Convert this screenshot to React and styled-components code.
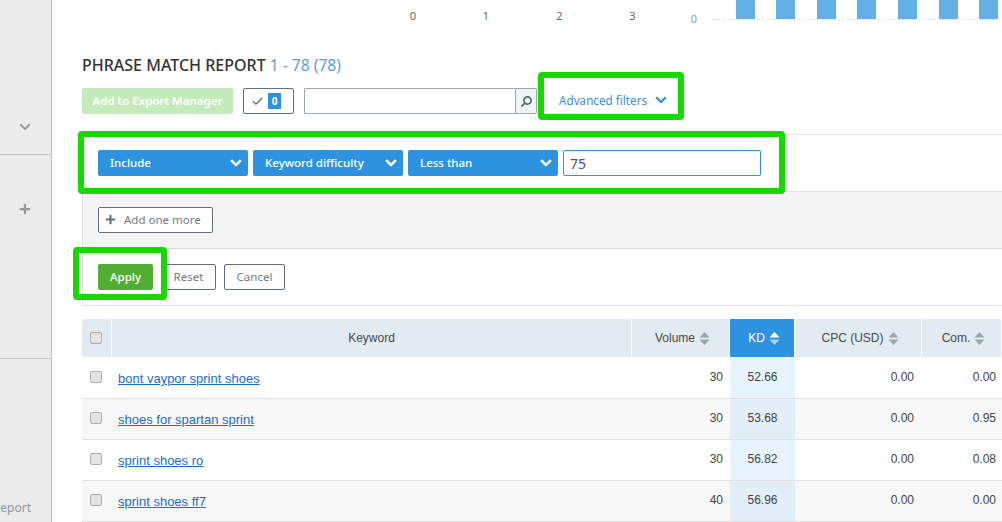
import React from 'react';
import styled, { createGlobalStyle } from 'styled-components';
import { FaChevronDown, FaPlus, FaSearch } from 'react-icons/fa';
import { Check } from 'lucide-react';

const rows = [
  { keyword: 'bont vaypor sprint shoes', volume: 30, kd: '52.66', cpc: '0.00', com: '0.00' },
  { keyword: 'shoes for spartan sprint', volume: 30, kd: '53.68', cpc: '0.00', com: '0.95' },
  { keyword: 'sprint shoes ro', volume: 30, kd: '56.82', cpc: '0.00', com: '0.08' },
  { keyword: 'sprint shoes ff7', volume: 40, kd: '56.96', cpc: '0.00', com: '0.00' },
];

const barPositions = [736, 776, 817, 857, 898, 939, 979];
const columns = '30px 520px 98px 65px 127px 80px';

const SortIcon = ({ active }) => (
  <SortSvg width="11" height="13" viewBox="0 0 11 13">
    <path d="M5.5 0 L10.5 5.5 H0.5 Z" fill={active ? '#fff' : '#9aa7ad'} />
    <path d="M0.5 7.5 H10.5 L5.5 13 Z" fill={active ? '#a9d3f3' : '#9aa7ad'} />
  </SortSvg>
);

const Chart = () => (
  <ChartSvg width="950" height="40" viewBox="52 0 950 40">
    {[['0', 413], ['1', 486], ['2', 559.5], ['3', 632.5]].map(([label, x]) => (
      <text key={x} x={x} y="20" textAnchor="middle" fontSize="11" fill="#666">{label}</text>
    ))}
    <text x="694" y="23" textAnchor="middle" fontSize="11" fill="#999">0</text>
    {barPositions.map((x) => (
      <rect key={x} x={x} y="0" width="19" height="19" fill="#63b0e6" />
    ))}
    <line x1="712" y1="19.5" x2="1002" y2="19.5" stroke="#dfe3e6" strokeDasharray="3 2" />
  </ChartSvg>
);

const App = () => {
  return (
    <Page>
      <GlobalStyle />
      <Sidebar>
        <SideSection $height={155} $pad={121}>
          <FaChevronDown />
        </SideSection>
        <SideSection $height={204} $pad={48}>
          <FaPlus />
        </SideSection>
        <SideFooter>report</SideFooter>
      </Sidebar>

      <Main>
        <Chart />
        <Title>
          PHRASE MATCH REPORT <TitleCount>1 - 78 (78)</TitleCount>
        </Title>

        <Toolbar>
          <ExportButton>Add to Export Manager</ExportButton>
          <SelectedBox>
            <Check size={13} strokeWidth={2.2} color="#5b6b75" />
            <Badge>0</Badge>
          </SelectedBox>
          <SearchGroup>
            <SearchInput />
            <SearchButton><FaSearch /></SearchButton>
          </SearchGroup>
          <AdvancedLink>
            Advanced filters <FaChevronDown />
          </AdvancedLink>
        </Toolbar>

        <FilterPanel>
          <FilterRow>
            <SelectButton>Include <FaChevronDown /></SelectButton>
            <SelectButton>Keyword difficulty <FaChevronDown /></SelectButton>
            <SelectButton>Less than <FaChevronDown /></SelectButton>
            <ValueInput value="75" readOnly />
          </FilterRow>
          <AddRow>
            <AddButton>
              <FaPlus /> Add one more
            </AddButton>
          </AddRow>
          <ActionRow>
            <ApplyButton>Apply</ApplyButton>
            <OutlineButton $width={55}>Reset</OutlineButton>
            <OutlineButton $width={61}>Cancel</OutlineButton>
          </ActionRow>
        </FilterPanel>

        <Table>
          <HeaderRow>
            <CheckHead><CheckBox /></CheckHead>
            <HeadCell>Keyword</HeadCell>
            <HeadCell $sortable>Volume <SortIcon /></HeadCell>
            <HeadCell $sortable $active>KD <SortIcon active /></HeadCell>
            <HeadCell $sortable>CPC (USD) <SortIcon /></HeadCell>
            <HeadCell $sortable>Com. <SortIcon /></HeadCell>
          </HeaderRow>
          {rows.map((row, i) => (
            <BodyRow key={row.keyword} $odd={i % 2 === 1}>
              <CheckCell><CheckBox /></CheckCell>
              <KeywordCell><KeywordLink href="#">{row.keyword}</KeywordLink></KeywordCell>
              <NumCell>{row.volume}</NumCell>
              <KdCell $odd={i % 2 === 1}>{row.kd}</KdCell>
              <NumCell $pad={8}>{row.cpc}</NumCell>
              <NumCell $pad={6}>{row.com}</NumCell>
            </BodyRow>
          ))}
        </Table>

        <Highlight $left={486} $top={72} $width={146} $height={48} />
        <Highlight $left={26} $top={131} $width={707} $height={63} />
        <Highlight $left={21} $top={247} $width={94} $height={53} />
      </Main>
    </Page>
  );
};

const GlobalStyle = createGlobalStyle`
  html, body {
    margin: 0;
    padding: 0;
    height: 100%;
    overflow: hidden;
    background: #fff;
  }
  * {
    box-sizing: border-box;
  }
`;

const uiFont = `"Noto Sans", "Open Sans", sans-serif`;
const tableFont = `"Liberation Sans", Arial, sans-serif`;

const Page = styled.div`
  display: flex;
  width: 1002px;
  height: 522px;
  overflow: hidden;
  font-family: ${uiFont};
`;

const Sidebar = styled.aside`
  display: flex;
  flex-direction: column;
  flex: 0 0 52px;
  background: #ececec;
  border-right: 1px solid #bdbdbd;
  overflow: hidden;
`;

const SideSection = styled.div`
  display: flex;
  justify-content: center;
  align-items: flex-start;
  height: ${(p) => p.$height}px;
  padding-top: ${(p) => p.$pad}px;
  padding-right: 2px;
  border-bottom: 1px solid #c4c4c4;
  color: #9a9a9a;
  font-size: 12px;
`;

const SideFooter = styled.div`
  display: flex;
  flex: 1;
  justify-content: flex-end;
  align-items: flex-end;
  padding: 0 20px 6px 0;
  color: #8f9aa3;
  font-size: 12px;
`;

const Main = styled.main`
  position: relative;
  flex: 1;
  min-width: 0;
`;

const ChartSvg = styled.svg`
  display: block;
  margin-bottom: 15px;
  font-family: ${uiFont};
`;

const Title = styled.h2`
  margin: 0 0 12px 30px;
  height: 21px;
  color: #333;
  font-size: 16px;
  line-height: 21px;
  font-weight: 500;
  white-space: nowrap;
`;

const TitleCount = styled.span`
  color: #5b9bd5;
  font-size: 15.6px;
  font-weight: 400;
`;

const Toolbar = styled.div`
  display: flex;
  align-items: center;
  height: 26px;
  margin-left: 30px;
`;

const ExportButton = styled.button`
  width: 151px;
  height: 26px;
  margin-right: 10px;
  padding: 0 0 2px;
  border: 0;
  border-radius: 2px;
  background: #c5eabb;
  color: #fff;
  font-family: inherit;
  font-size: 11.5px;
  font-weight: 600;
`;

const SelectedBox = styled.div`
  display: flex;
  align-items: center;
  gap: 4px;
  width: 51px;
  height: 26px;
  margin-right: 10px;
  padding-left: 7px;
  border: 1px solid #5f717c;
  border-radius: 2px;
`;

const Badge = styled.span`
  width: 13px;
  height: 16px;
  background: #2d93e0;
  color: #fff;
  font-size: 10px;
  font-weight: 700;
  line-height: 16px;
  text-align: center;
`;

const SearchGroup = styled.div`
  display: flex;
  width: 233px;
  height: 26px;
`;

const SearchInput = styled.input`
  flex: 1;
  min-width: 0;
  border: 1px solid #9aa8b0;
  border-right: 0;
  border-radius: 2px 0 0 2px;
  outline: none;
`;

const SearchButton = styled.button`
  display: flex;
  align-items: center;
  justify-content: center;
  width: 22px;
  padding: 0;
  border: 1px solid #9aa8b0;
  border-radius: 0 2px 2px 0;
  background: #f1f4f5;
  color: #5b6b75;
  font-size: 11px;

  svg {
    transform: scaleX(-1);
  }
`;

const AdvancedLink = styled.a`
  display: flex;
  align-items: center;
  gap: 8px;
  margin-left: 22px;
  padding-bottom: 3px;
  color: #3d8fd6;
  font-size: 11.7px;
  white-space: nowrap;

  svg {
    font-size: 12px;
    stroke: currentColor;
    stroke-width: 24px;
  }
`;

const FilterPanel = styled.section`
  height: 172px;
  margin: 20px 0 13px 30px;
  border-top: 1px solid #e3e3e3;
  border-bottom: 1px solid #e3e3e3;
  border-left: 1px solid #e3e3e3;
`;

const FilterRow = styled.div`
  display: flex;
  gap: 5px;
  height: 56px;
  padding: 15px 0 0 15px;
`;

const SelectButton = styled.button`
  display: flex;
  align-items: center;
  justify-content: space-between;
  width: 150px;
  height: 26px;
  padding: 0 6px 2px 12px;
  border: 0;
  border-radius: 2px;
  background: #2d93e0;
  color: #fff;
  font-family: inherit;
  font-size: 11.5px;
  font-weight: 500;

  svg {
    margin-top: 2px;
    font-size: 12px;
    stroke: currentColor;
    stroke-width: 36px;
  }
`;

const ValueInput = styled.input`
  width: 198px;
  height: 26px;
  padding: 0 6px;
  border: 1px solid #2d93e0;
  border-radius: 2px;
  outline: none;
  color: #555;
  font-family: inherit;
  font-size: 14px;
`;

const AddRow = styled.div`
  display: flex;
  align-items: center;
  height: 58px;
  padding: 0 0 1px 15px;
  border-top: 1px solid #e3e3e3;
  border-bottom: 1px solid #dcdcdc;
  background: #f4f4f4;
`;

const ActionRow = styled.div`
  display: flex;
  align-items: center;
  gap: 8px;
  height: 55px;
  padding-left: 15px;
`;

const OutlineButton = styled.button`
  display: flex;
  align-items: center;
  justify-content: center;
  width: ${(p) => p.$width}px;
  height: 26px;
  padding: 0;
  border: 1px solid #5f717c;
  border-radius: 2px;
  background: #fff;
  color: #6f7c84;
  font-family: inherit;
  font-size: 11.5px;
`;

const AddButton = styled(OutlineButton)`
  justify-content: flex-start;
  gap: 8px;
  width: 115px;
  padding-left: 6px;

  svg {
    color: #5f717c;
    font-size: 11px;
  }
`;

const ApplyButton = styled.button`
  width: 55px;
  height: 26px;
  padding: 0;
  border: 0;
  border-radius: 2px;
  background: #52ae32;
  color: #fff;
  font-family: inherit;
  font-size: 11.5px;
  font-weight: 500;
`;

const Table = styled.div`
  margin-left: 30px;
  width: 920px;
  font-family: ${tableFont};
  font-size: 12px;
`;

const HeaderRow = styled.div`
  display: grid;
  grid-template-columns: ${columns};
  height: 38px;
  margin-bottom: 1px;
`;

const HeadCell = styled.div`
  display: flex;
  align-items: center;
  justify-content: center;
  gap: 4px;
  padding-left: ${(p) => (p.$sortable ? 4 : 0)}px;
  border-right: 1px solid #fff;
  background: ${(p) => (p.$active ? '#2d93e0' : '#e2ebf1')};
  color: ${(p) => (p.$active ? '#fff' : '#4a4a4a')};
`;

const CheckHead = styled(HeadCell)`
  justify-content: flex-start;
  padding-left: 8px;
`;

const SortSvg = styled.svg`
  display: block;
`;

const BodyRow = styled.div`
  display: grid;
  grid-template-columns: ${columns};
  height: 41px;
  border-bottom: 1px solid #e0e0e0;
  background: ${(p) => (p.$odd ? '#f8f8f8' : '#fff')};
  color: #444;
`;

const CheckBox = styled.span`
  display: block;
  width: 12px;
  height: 12px;
  border: 1px solid #adadad;
  border-radius: 2px;
  background: #e4e4e4;
`;

const CheckCell = styled.div`
  padding: 13px 0 0 8px;
`;

const KeywordCell = styled.div`
  padding: 13px 0 0 6px;
  font-size: 13px;
`;

const KeywordLink = styled.a`
  color: #1a6dcc;
  text-decoration: underline;
`;

const NumCell = styled.div`
  padding: 12px ${(p) => p.$pad ?? 7}px 0 0;
  text-align: right;
`;

const KdCell = styled.div`
  padding-top: 12px;
  background: ${(p) => (p.$odd ? '#e2eef8' : '#e7f3fd')};
  text-align: center;
`;

const Highlight = styled.div`
  position: absolute;
  left: ${(p) => p.$left}px;
  top: ${(p) => p.$top}px;
  width: ${(p) => p.$width}px;
  height: ${(p) => p.$height}px;
  border: 6px solid #17d900;
  border-radius: 4px;
  pointer-events: none;
`;

export default App;
